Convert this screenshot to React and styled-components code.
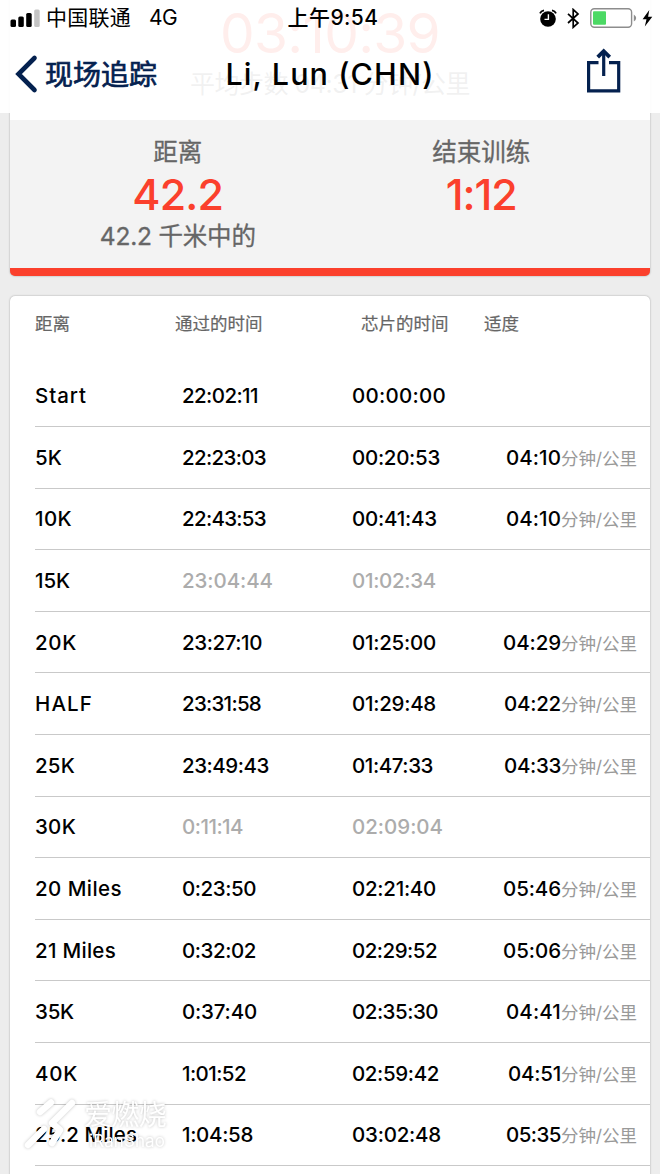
import React, { useLayoutEffect, useRef, useState } from "react";
import styled, { createGlobalStyle } from "styled-components";

const splits = [
  { name: ["Start", 52], clock: ["22:02:11", 76], chip: ["00:00:00", 94] },
  { name: ["5K", 27], clock: ["22:23:03", 84], chip: ["00:20:53", 88], pace: ["04:10", 55] },
  { name: ["10K", 37], clock: ["22:43:53", 84], chip: ["00:41:43", 85], pace: ["04:10", 55] },
  { name: ["15K", 35], clock: ["23:04:44", 91], chip: ["01:02:34", 84], muted: true },
  { name: ["20K", 42], clock: ["23:27:10", 80], chip: ["01:25:00", 84], pace: ["04:29", 58] },
  { name: ["HALF", 58], clock: ["23:31:58", 79], chip: ["01:29:48", 84], pace: ["04:22", 57] },
  { name: ["25K", 40], clock: ["23:49:43", 87], chip: ["01:47:33", 81], pace: ["04:33", 57] },
  { name: ["30K", 41], clock: ["0:11:14", 61], chip: ["02:09:04", 91], muted: true },
  { name: ["20 Miles", 87], clock: ["0:23:50", 74], chip: ["02:21:40", 84], pace: ["05:46", 58] },
  { name: ["21 Miles", 81], clock: ["0:32:02", 74], chip: ["02:29:52", 85], pace: ["05:06", 58] },
  { name: ["35K", 39], clock: ["0:37:40", 75], chip: ["02:35:30", 86], pace: ["04:41", 55] },
  { name: ["40K", 43], clock: ["1:01:52", 64], chip: ["02:59:42", 87], pace: ["04:51", 53] },
  { name: ["25.2 Miles", 102], clock: ["1:04:58", 71], chip: ["03:02:48", 89], pace: ["05:35", 55] },
];

// Tracks the letters so that a label takes up exactly the given width
const Fit = ({ width, children }) => {
  const ref = useRef(null);
  const [spacing, setSpacing] = useState(0);
  useLayoutEffect(() => {
    const natural = ref.current.getBoundingClientRect().width;
    setSpacing((width - natural) / children.length);
  }, [width, children]);
  return (
    <FitText ref={ref} style={{ letterSpacing: spacing }}>
      {children}
    </FitText>
  );
};

const Signal = () => (
  <svg width="31" height="20" viewBox="0 0 31 20">
    <rect x="0.5" y="11.5" width="5.5" height="7.5" rx="1.5" />
    <rect x="8.3" y="8.5" width="5.5" height="10.5" rx="1.5" />
    <rect x="16.2" y="5" width="5.5" height="14" rx="1.5" />
    <rect x="24.2" y="1.5" width="5.5" height="17.5" rx="1.5" fill="#c4c4c4" />
  </svg>
);

const Alarm = () => (
  <svg width="18" height="18" viewBox="0 0 18 18">
    <circle cx="9" cy="10" r="7.8" />
    <path d="M1 4.3Q2 1.8 5 1.3M17 4.3Q16 1.8 13 1.3" fill="none" stroke="#000" strokeWidth="1.8" />
    <path d="M9.4 5.3V10.4H5.5" fill="none" stroke="#fff" strokeWidth="1.4" />
  </svg>
);

const Bluetooth = () => (
  <svg width="13" height="21" viewBox="0 0 13 21">
    <path d="M1 5.8L11 15L6.2 19.3V1.5L11 5.9L1 15" fill="none" stroke="#000" strokeWidth="1.7" />
  </svg>
);

const Battery = () => (
  <svg width="47" height="20" viewBox="0 0 47 20">
    <rect x="0.8" y="0.8" width="40.8" height="18.4" rx="3.5" fill="none" stroke="#8d8d8d" strokeWidth="1.4" />
    <rect x="3" y="3.2" width="13" height="13.6" rx="1" fill="#4cd964" />
    <path d="M43.8 6.5Q46.2 8 46.2 10T43.8 13.5Z" fill="#8d8d8d" />
  </svg>
);

const Bolt = () => (
  <svg width="11" height="17" viewBox="0 0 11 17">
    <path d="M7.3 0L0.6 9.3H4.5L2.8 16.5L10.3 6.7H6.1Z" />
  </svg>
);

const Chevron = () => (
  <svg width="24" height="40" viewBox="0 0 24 40">
    <path d="M19.5 4L3.5 20L19.5 36" fill="none" stroke="#04214f" strokeWidth="4.6" strokeLinecap="round" />
  </svg>
);

const Share = () => (
  <svg width="36" height="46" viewBox="0 0 36 46">
    <g fill="none" stroke="#04214f" strokeWidth="3.2">
      <path d="M12.5 14.6H2.6V42.8H32.7V14.6H23" />
      <path d="M17.7 28V4" />
      <path d="M11.7 9.2L17.7 3.2L23.7 9.2" strokeWidth="3.8" />
    </g>
  </svg>
);

const Runner = () => (
  <svg width="56" height="56" viewBox="0 0 56 56">
    <g fill="none" stroke="#fff" strokeWidth="6.5" strokeLinecap="round" strokeLinejoin="round">
      <path d="M18 17L29 7.5" />
      <path d="M50 8L30 28L38 35L30 48" />
      <path d="M6 50L22 34" />
    </g>
  </svg>
);

const App = () => (
  <Screen>
    <GlobalStyle />
    <Summary>
      <Result>
        <FinishTime><Fit width={220}>03:10:39</Fit></FinishTime>
        <AveragePace><Fit width={280}>平均步数 04:31 分钟/公里</Fit></AveragePace>
      </Result>
      <Stats>
        <Stat>
          <StatLabel>距离</StatLabel>
          <StatValue><Fit width={91}>42.2</Fit></StatValue>
          <StatLabel><Fit width={156}>42.2 千米中的</Fit></StatLabel>
        </Stat>
        <Stat>
          <StatLabel>结束训练</StatLabel>
          <StatValue><Fit width={71}>1:12</Fit></StatValue>
        </Stat>
      </Stats>
    </Summary>
    <Table>
      <TableHead>
        <span>距离</span>
        <span>通过的时间</span>
        <span>芯片的时间</span>
        <span>适度</span>
      </TableHead>
      {splits.map(({ name, clock, chip, pace, muted }) => (
        <Row key={name[0]}>
          <span><Fit width={name[1]}>{name[0]}</Fit></span>
          <Time $muted={muted}><Fit width={clock[1]}>{clock[0]}</Fit></Time>
          <Time $muted={muted}><Fit width={chip[1]}>{chip[0]}</Fit></Time>
          {pace && (
            <Pace>
              <Fit width={pace[1]}>{pace[0]}</Fit>
              <Unit><Fit width={76}>分钟/公里</Fit></Unit>
            </Pace>
          )}
        </Row>
      ))}
    </Table>
    <Header>
      <StatusBar>
        <Carrier>
          <Signal />
          <Fit width={85}>中国联通</Fit>
          <Network><Fit width={28}>4G</Fit></Network>
        </Carrier>
        <Clock><Fit width={91}>上午9:54</Fit></Clock>
        <Indicators>
          <Alarm />
          <Bluetooth />
          <Battery />
          <Bolt />
        </Indicators>
      </StatusBar>
      <NavBar>
        <Back>
          <Chevron />
          <BackLabel><Fit width={112}>现场追踪</Fit></BackLabel>
        </Back>
        <Title><Fit width={209}>Li, Lun (CHN)</Fit></Title>
        <Action><Share /></Action>
      </NavBar>
    </Header>
    <Watermark>
      <Runner />
      <Brand>
        <Fit width={82}>爱燃烧</Fit>
        <BrandLatin><Fit width={76}>iRanShao</Fit></BrandLatin>
      </Brand>
    </Watermark>
  </Screen>
);

const GlobalStyle = createGlobalStyle`
  body {
    margin: 0;
  }
  svg {
    display: block;
    flex-shrink: 0;
  }
`;

const Screen = styled.div`
  position: relative;
  box-sizing: border-box;
  width: 660px;
  height: 1174px;
  padding: 0 10px;
  overflow: hidden;
  background: #ededed;
  color: #000;
  font-family: Inter, "Noto Sans CJK SC", sans-serif;
`;

const FitText = styled.span`
  display: inline-block;
  white-space: pre;
`;

const Header = styled.header`
  position: absolute;
  top: 0;
  left: 0;
  width: 660px;
  height: 113px;
  background: rgba(255, 255, 255, 0.91);
`;

const StatusBar = styled.div`
  display: grid;
  grid-template-columns: 230px 200px 230px;
  align-items: center;
  height: 36px;
  font-size: 21px;
  line-height: 36px;
`;

const Carrier = styled.div`
  display: flex;
  align-items: center;
  gap: 5px;
  padding-left: 10px;
`;

const Network = styled.span`
  padding-left: 13px;
`;

const Clock = styled.div`
  padding-left: 6px;
  text-align: center;
  font-weight: 500;
`;

const Indicators = styled.div`
  display: flex;
  align-items: center;
  justify-content: flex-end;
  gap: 10px;
  padding-right: 7px;

  svg:last-child {
    margin-left: -5px;
  }
`;

const NavBar = styled.div`
  display: grid;
  grid-template-columns: 210px 240px 210px;
  align-items: center;
  height: 76px;
`;

const Back = styled.div`
  display: flex;
  align-items: center;
  gap: 6px;
  padding-left: 15px;
`;

const BackLabel = styled.span`
  padding-top: 2px;
  color: #04214f;
  font-size: 28px;
  line-height: 40px;
  -webkit-text-stroke: 0.7px #04214f;
`;

const Title = styled.h1`
  margin: 0;
  text-align: center;
  font-size: 30.5px;
  font-weight: 450;
  line-height: 40px;
`;

const Action = styled.div`
  display: flex;
  justify-content: flex-end;
  padding: 0 38px 6px 0;
`;

const Summary = styled.section`
  box-sizing: border-box;
  height: 276px;
  border-bottom: 8px solid #fb402c;
  border-radius: 0 0 5px 5px;
  background: #f3f3f3;
  box-shadow: 0 0 2px rgba(0, 0, 0, 0.35);
`;

const Result = styled.div`
  display: flex;
  flex-direction: column;
  align-items: center;
  box-sizing: border-box;
  height: 120px;
  background: #fff;
`;

const FinishTime = styled.div`
  color: #fb402c;
  font-size: 55px;
  line-height: 66px;
`;

const AveragePace = styled.div`
  color: #666;
  font-size: 25px;
  line-height: 36px;
`;

const Stats = styled.div`
  display: grid;
  grid-template-columns: 1fr 1fr;
  padding: 13px 17px 0 16px;
`;

const Stat = styled.div`
  display: flex;
  flex-direction: column;
  align-items: center;
`;

const StatLabel = styled.div`
  color: #666;
  font-size: 24.5px;
  line-height: 38px;
  -webkit-text-stroke: 0.3px #666;
`;

const StatValue = styled.div`
  color: #fb402c;
  font-size: 43px;
  font-weight: 450;
  line-height: 46px;
`;

const Table = styled.section`
  margin-top: 19.5px;
  height: 900px;
  border-radius: 5px;
  background: #fff;
  box-shadow: 0 0 2px rgba(0, 0, 0, 0.35);
`;

const columns = `
  display: grid;
  align-items: center;
  margin-left: 25px;
`;

const TableHead = styled.div`
  ${columns}
  grid-template-columns: 140px 186px 123px 1fr;
  height: 53px;
  padding-bottom: 17px;
  color: #666;
  font-size: 17.5px;
  -webkit-text-stroke: 0.2px #666;
`;

const Row = styled.div`
  ${columns}
  grid-template-columns: 147px 170px 110px 1fr;
  box-sizing: border-box;
  height: 61.6px;
  border-bottom: 1px solid #c9c9c9;
  font-size: 20.5px;
  font-weight: 450;
`;

const Time = styled.span`
  color: ${({ $muted }) => ($muted ? "#acacac" : "#000")};
`;

const Pace = styled.div`
  display: flex;
  align-items: baseline;
  justify-content: flex-end;
  padding-right: 13px;
`;

const Unit = styled.span`
  color: #999;
  font-size: 17.5px;
  font-weight: 400;
`;

const Watermark = styled.div`
  position: absolute;
  left: 22px;
  top: 1095px;
  display: flex;
  gap: 6px;
  color: #fff;
  filter: drop-shadow(0 0 1.5px rgba(0, 0, 0, 0.24));
`;

const Brand = styled.div`
  display: flex;
  flex-direction: column;
  font-size: 28px;
  line-height: 40px;
`;

const BrandLatin = styled.span`
  padding-left: 5px;
  font-size: 17px;
  line-height: 12px;
`;

export default App;
